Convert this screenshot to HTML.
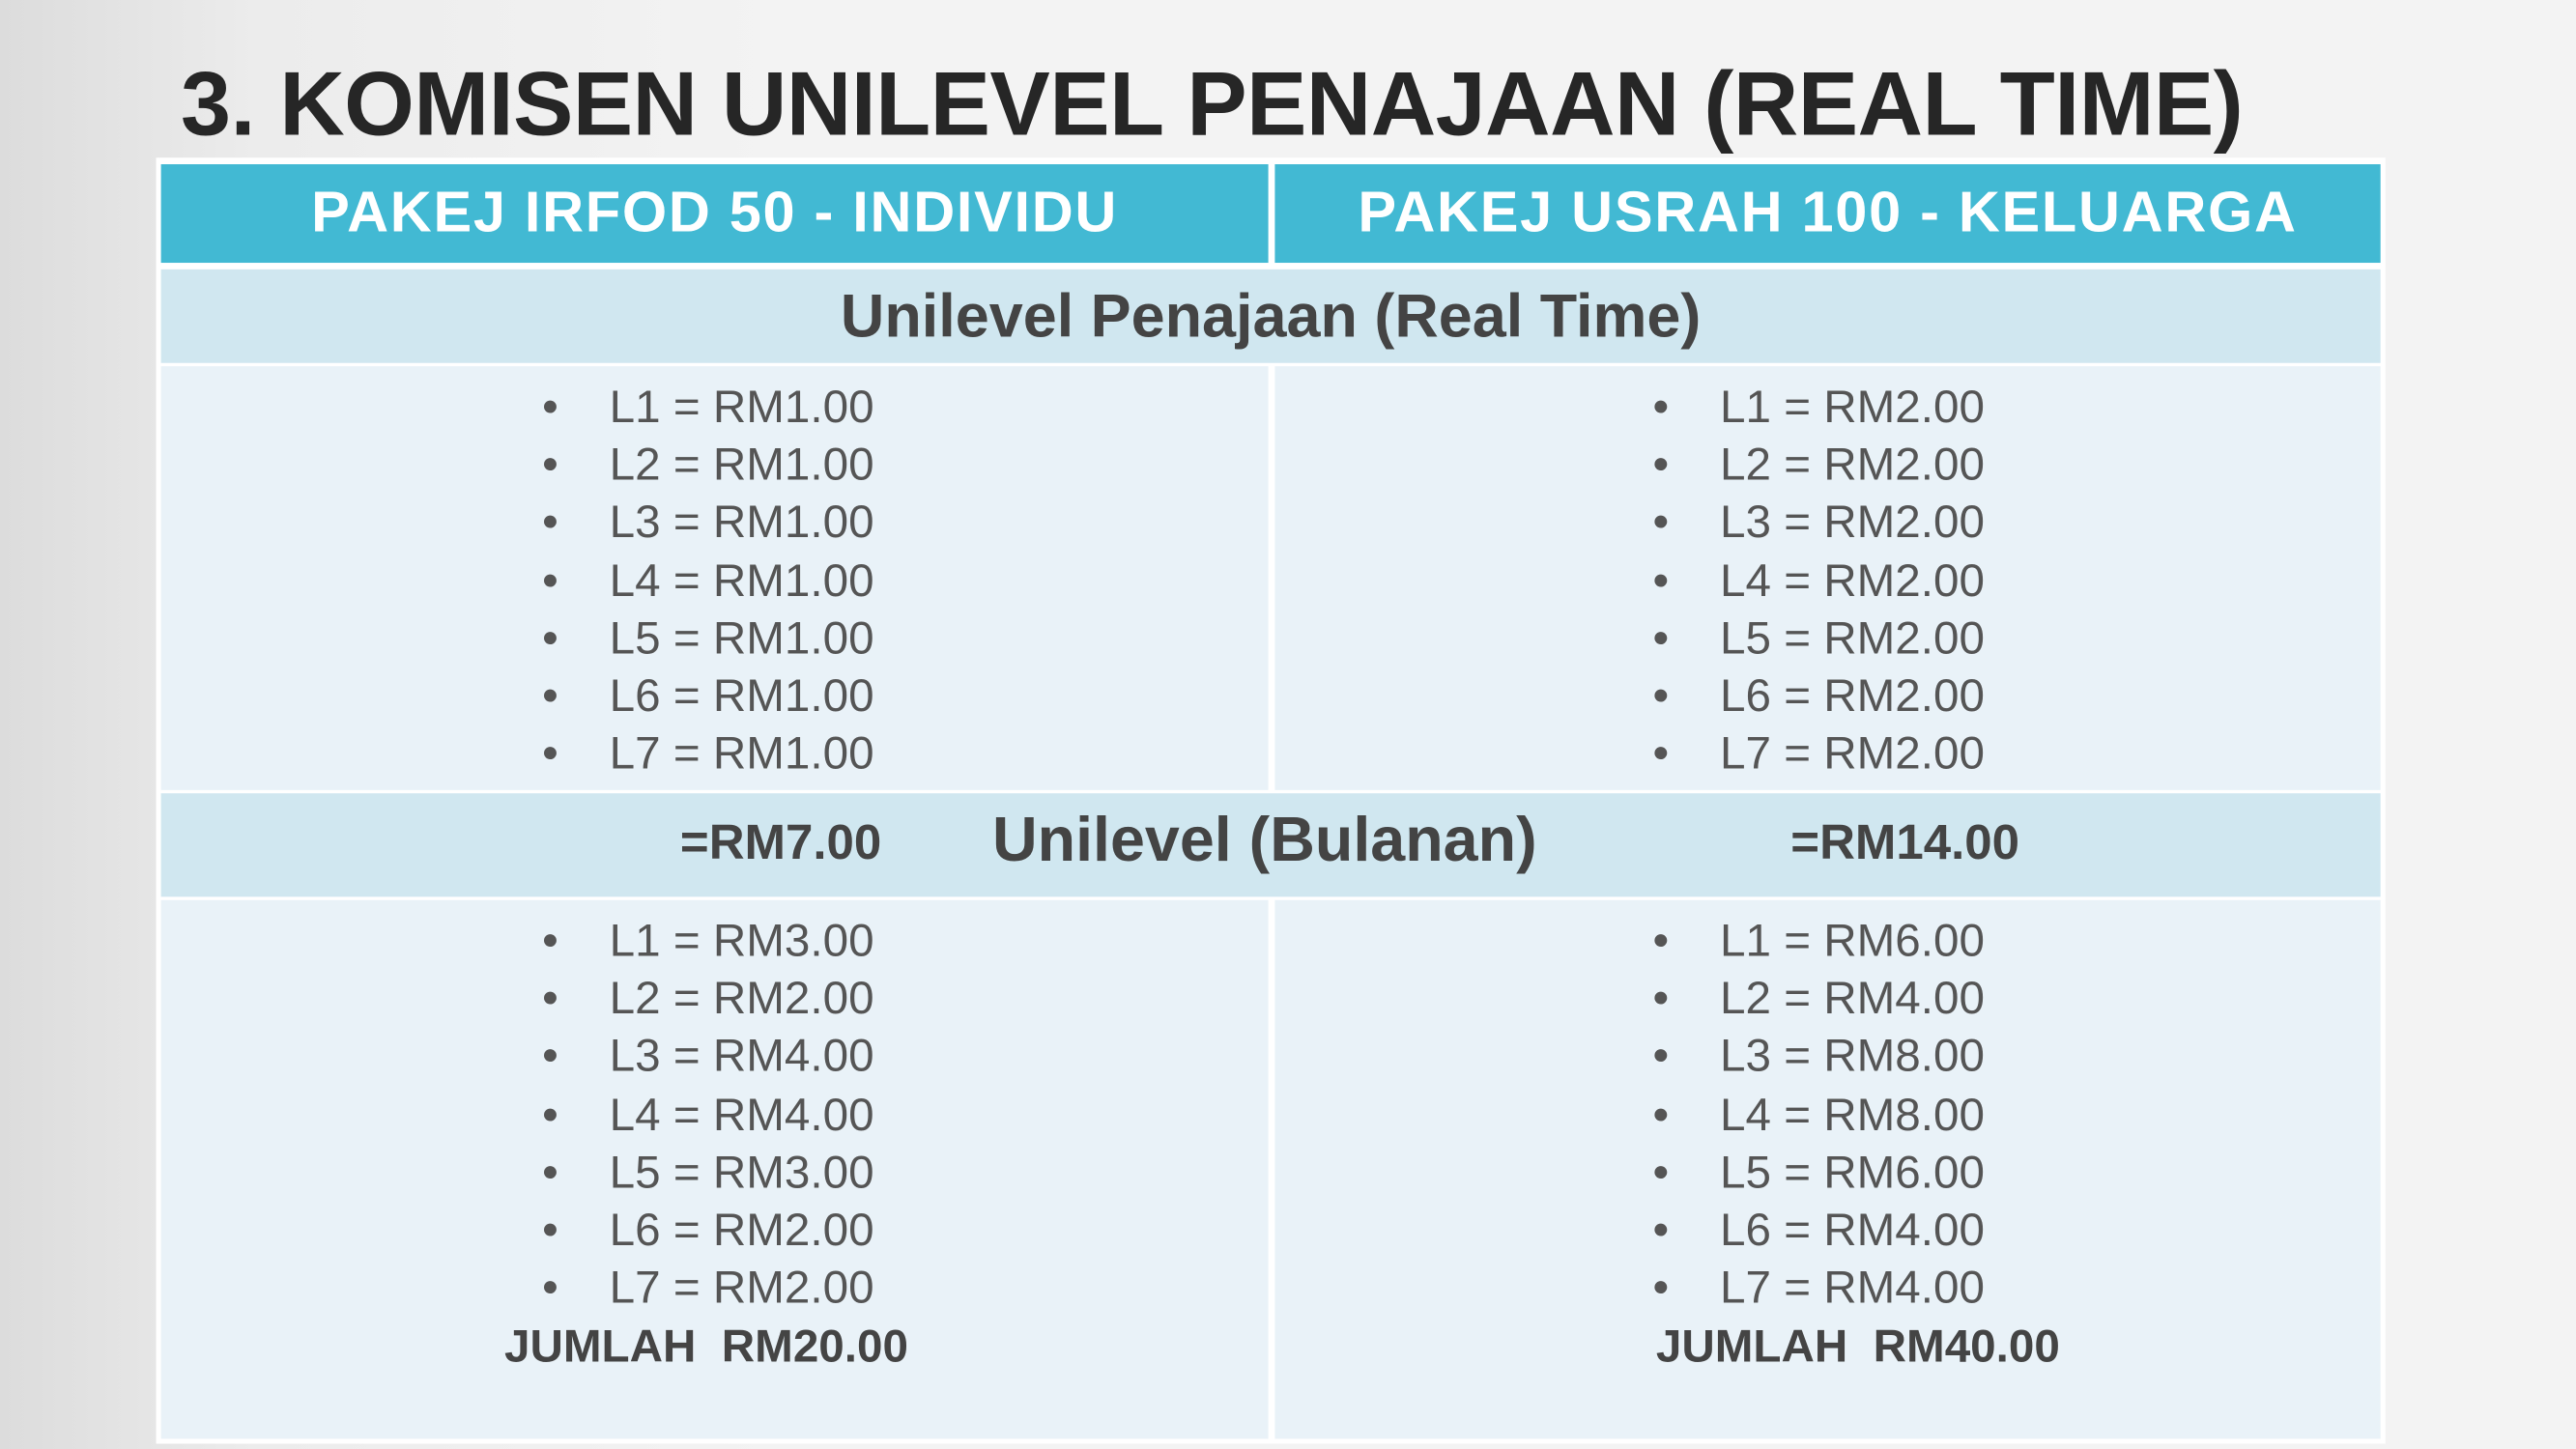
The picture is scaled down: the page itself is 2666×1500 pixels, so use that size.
<!DOCTYPE html>
<html><head><meta charset="utf-8"><style>
html,body{margin:0;padding:0;}
body{width:2666px;height:1500px;overflow:hidden;background:linear-gradient(90deg,#dcdcdc 0%,#ececec 10%,#f3f3f3 30%,#f3f3f3 100%);font-family:"Liberation Sans",sans-serif;}
#w{position:absolute;left:0;top:0;width:1568px;height:882px;transform:scale(1.70026);transform-origin:0 0;}
.a{position:absolute;white-space:nowrap;}
.t{left:110px;top:31px;font-size:55px;font-weight:bold;color:#262626;letter-spacing:-0.35px;}
.box{position:absolute;}
.h{color:#fff;font-weight:bold;font-size:35px;text-align:center;line-height:60px;letter-spacing:1px;}
.li{font-size:28px;color:#555;line-height:35.2px;}
.b{font-weight:bold;color:#444;}
</style></head><body><div id="w">
<div class="a t">3. KOMISEN UNILEVEL PENAJAAN (REAL TIME)</div>
<div class="box" style="left:95px;top:96px;width:1357px;height:783px;background:#fff;"></div>
<div class="box h" style="left:98px;top:100px;width:674px;height:60px;background:#42b9d3;">PAKEJ IRFOD 50 - INDIVIDU</div>
<div class="box h" style="left:776px;top:100px;width:673px;height:60px;background:#42b9d3;">PAKEJ USRAH 100 - KELUARGA</div>
<div class="box" style="left:98px;top:164px;width:1351px;height:57px;background:#d0e7f0;text-align:center;font-size:37px;font-weight:bold;color:#444;line-height:57px;">Unilevel Penajaan (Real Time)</div>
<div class="box" style="left:98px;top:223px;width:674px;height:258px;background:#e9f2f8;"></div>
<div class="box" style="left:776px;top:223px;width:673px;height:258px;background:#e9f2f8;"></div>
<div class="box" style="left:98px;top:483px;width:1351px;height:63px;background:#d0e7f0;"></div>
<div class="box" style="left:98px;top:548px;width:674px;height:328px;background:#e9f2f8;"></div>
<div class="box" style="left:776px;top:548px;width:673px;height:328px;background:#e9f2f8;"></div>
<div class="a b" style="left:414px;top:497px;font-size:30px;">=RM7.00</div>
<div class="a b" style="left:604px;top:491px;font-size:38px;">Unilevel (Bulanan)</div>
<div class="a b" style="left:1090px;top:497px;font-size:30px;">=RM14.00</div>

<div class="a li" style="left:330px;top:230px;">•&nbsp;&nbsp;&nbsp;&nbsp;L1 = RM1.00<br>•&nbsp;&nbsp;&nbsp;&nbsp;L2 = RM1.00<br>•&nbsp;&nbsp;&nbsp;&nbsp;L3 = RM1.00<br>•&nbsp;&nbsp;&nbsp;&nbsp;L4 = RM1.00<br>•&nbsp;&nbsp;&nbsp;&nbsp;L5 = RM1.00<br>•&nbsp;&nbsp;&nbsp;&nbsp;L6 = RM1.00<br>•&nbsp;&nbsp;&nbsp;&nbsp;L7 = RM1.00</div>
<div class="a li" style="left:1006px;top:230px;">•&nbsp;&nbsp;&nbsp;&nbsp;L1 = RM2.00<br>•&nbsp;&nbsp;&nbsp;&nbsp;L2 = RM2.00<br>•&nbsp;&nbsp;&nbsp;&nbsp;L3 = RM2.00<br>•&nbsp;&nbsp;&nbsp;&nbsp;L4 = RM2.00<br>•&nbsp;&nbsp;&nbsp;&nbsp;L5 = RM2.00<br>•&nbsp;&nbsp;&nbsp;&nbsp;L6 = RM2.00<br>•&nbsp;&nbsp;&nbsp;&nbsp;L7 = RM2.00</div>
<div class="a li" style="left:330px;top:555px;">•&nbsp;&nbsp;&nbsp;&nbsp;L1 = RM3.00<br>•&nbsp;&nbsp;&nbsp;&nbsp;L2 = RM2.00<br>•&nbsp;&nbsp;&nbsp;&nbsp;L3 = RM4.00<br>•&nbsp;&nbsp;&nbsp;&nbsp;L4 = RM4.00<br>•&nbsp;&nbsp;&nbsp;&nbsp;L5 = RM3.00<br>•&nbsp;&nbsp;&nbsp;&nbsp;L6 = RM2.00<br>•&nbsp;&nbsp;&nbsp;&nbsp;L7 = RM2.00</div>
<div class="a li" style="left:1006px;top:555px;">•&nbsp;&nbsp;&nbsp;&nbsp;L1 = RM6.00<br>•&nbsp;&nbsp;&nbsp;&nbsp;L2 = RM4.00<br>•&nbsp;&nbsp;&nbsp;&nbsp;L3 = RM8.00<br>•&nbsp;&nbsp;&nbsp;&nbsp;L4 = RM8.00<br>•&nbsp;&nbsp;&nbsp;&nbsp;L5 = RM6.00<br>•&nbsp;&nbsp;&nbsp;&nbsp;L6 = RM4.00<br>•&nbsp;&nbsp;&nbsp;&nbsp;L7 = RM4.00</div>
<div class="a b" style="left:307px;top:804px;font-size:28px;">JUMLAH&nbsp; RM20.00</div>
<div class="a b" style="left:1008px;top:804px;font-size:28px;">JUMLAH&nbsp; RM40.00</div>
</div></body></html>
